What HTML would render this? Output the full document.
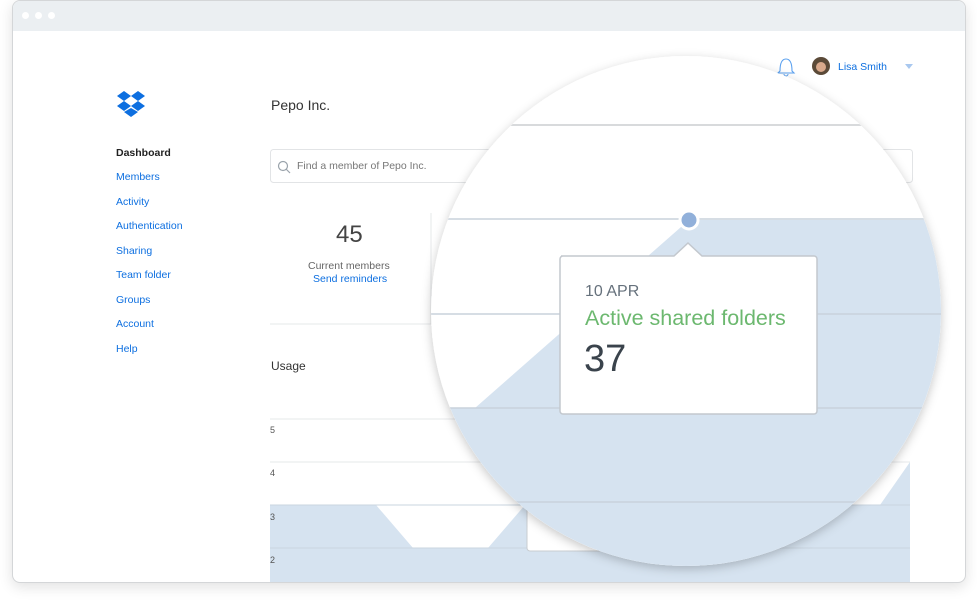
<!DOCTYPE html>
<html><head><meta charset="utf-8"><style>
body{margin:0;width:977px;height:607px;background:#fff;font-family:"Liberation Sans",sans-serif;position:relative;overflow:hidden}
.a{position:absolute;white-space:nowrap}
.nav{left:116px;font-size:10.5px;color:#0d6fe0}
</style></head><body>
<div class="a" style="left:12px;top:0;width:952px;height:581px;border:1px solid #d4d6d8;border-radius:8px;box-shadow:0 4px 14px rgba(0,0,0,.12);background:#fff;overflow:hidden">
<div style="height:30px;background:#ebeff2"></div>
</div>
<div class="a" style="left:22px;top:12px;width:7px;height:7px;border-radius:50%;background:#fff"></div>
<div class="a" style="left:35px;top:12px;width:7px;height:7px;border-radius:50%;background:#fff"></div>
<div class="a" style="left:48px;top:12px;width:7px;height:7px;border-radius:50%;background:#fff"></div>

<svg class="a" style="left:0;top:0" width="977" height="607">
<g fill="#0d6fe0">
<polygon points="117,96 124,91 131,96 124,101"/><polygon points="131,96 138,91 145,96 138,101"/>
<polygon points="117,106 124,101 131,106 124,111"/><polygon points="131,106 138,101 145,106 138,111"/>
<polygon points="124,112 131,108 138,112 131,117"/></g>
<g stroke="#e6e8ea"><line x1="270" y1="419" x2="910" y2="419"/><line x1="270" y1="462" x2="910" y2="462"/></g>
<polygon points="270,505 376,505 413,548 488,548 525,505 880,505 910,462 910,582 270,582" fill="#d6e3f0"/>
<g stroke="#c9d4df"><line x1="270" y1="505" x2="910" y2="505"/><line x1="270" y1="548" x2="910" y2="548"/></g>
<rect x="527" y="488" width="120" height="63" rx="3" fill="#fff" stroke="#c8ccd0"/>
<line x1="270" y1="324" x2="460" y2="324" stroke="#e6e8ea"/>
<line x1="431" y1="213" x2="431" y2="324" stroke="#e6e8ea"/>
<rect x="270.5" y="149.5" width="642" height="33" rx="3" fill="#fff" stroke="#e2e4e6"/>
<circle cx="283" cy="166" r="4.5" fill="none" stroke="#9aa3ab" stroke-width="1.2"/><line x1="286" y1="169" x2="290" y2="173" stroke="#9aa3ab" stroke-width="1.2"/>
<path d="M780,71 C780,63 782,59 786,59 C790,59 792,63 792,71 L794,73 L778,73 Z" fill="none" stroke="#5aa0ef" stroke-width="1.1"/>
<path d="M784,74 a2,2 0 0 0 4,0" fill="none" stroke="#5aa0ef"/>
<circle cx="821" cy="66" r="9" fill="#5b4a38"/><circle cx="821" cy="67" r="5" fill="#d9a98c"/>
<polygon points="905,64 913,64 909,69" fill="#a9c8ef"/>
<defs><clipPath id="c"><circle cx="686" cy="311" r="255"/></clipPath>
<filter id="s" x="-20%" y="-20%" width="140%" height="140%"><feDropShadow dx="0" dy="3" stdDeviation="5" flood-color="#000" flood-opacity=".22"/></filter></defs>
<circle cx="686" cy="311" r="255" fill="#fff" filter="url(#s)"/>
<g clip-path="url(#c)">
<line x1="420" y1="125" x2="950" y2="125" stroke="#d8dadc" stroke-width="2"/>
<polygon points="475,408 689,220 950,220 950,580 420,580 420,408" fill="#d6e3f0"/>
<g stroke="#c9d2dc" stroke-width="1.5"><line x1="420" y1="219" x2="950" y2="219"/><line x1="420" y1="314" x2="950" y2="314"/><line x1="420" y1="408" x2="950" y2="408"/><line x1="420" y1="502" x2="950" y2="502"/></g>
<path d="M561,256 H674 L688,243 L702,256 H814 a3,3 0 0 1 3,3 V411 a3,3 0 0 1 -3,3 H563 a3,3 0 0 1 -3,-3 V259 a3,3 0 0 1 3,-3 Z" fill="#fff" stroke="#c3c8ce" stroke-width="1.5"/>
<circle cx="689" cy="220" r="9" fill="#91b0da" stroke="#fff" stroke-width="3"/>
</g>
</svg>

<div class="a" style="left:271px;top:97px;font-size:14px;color:#333">Pepo Inc.</div>
<div class="a" style="left:297px;top:160px;font-size:10.5px;color:#777">Find a member of Pepo Inc.</div>
<div class="a" style="left:116px;top:147px;font-size:10.5px;font-weight:bold;color:#222">Dashboard</div>
<div class="a nav" style="top:171px">Members</div>
<div class="a nav" style="top:196px">Activity</div>
<div class="a nav" style="top:220px">Authentication</div>
<div class="a nav" style="top:245px">Sharing</div>
<div class="a nav" style="top:269px">Team folder</div>
<div class="a nav" style="top:294px">Groups</div>
<div class="a nav" style="top:318px">Account</div>
<div class="a nav" style="top:343px">Help</div>
<div class="a" style="left:336px;top:221px;font-size:24px;color:#444">45</div>
<div class="a" style="left:308px;top:260px;font-size:10.5px;color:#666">Current members</div>
<div class="a" style="left:313px;top:273px;font-size:10.5px;color:#0d6fe0">Send reminders</div>
<div class="a" style="left:271px;top:359px;font-size:12px;color:#333">Usage</div>
<div class="a" style="left:270px;top:425px;font-size:9px;color:#555">5</div>
<div class="a" style="left:270px;top:468px;font-size:9px;color:#555">4</div>
<div class="a" style="left:270px;top:512px;font-size:9px;color:#555">3</div>
<div class="a" style="left:270px;top:555px;font-size:9px;color:#555">2</div>
<div class="a" style="left:838px;top:61px;font-size:10.5px;color:#0d6fe0">Lisa Smith</div>
<div class="a" style="left:585px;top:283px;font-size:16px;color:#66717c">10 APR</div>
<div class="a" style="left:585px;top:306px;font-size:21.5px;color:#6cb86f">Active shared folders</div>
<div class="a" style="left:584px;top:338px;font-size:38px;color:#3a434c">37</div>
</body></html>
